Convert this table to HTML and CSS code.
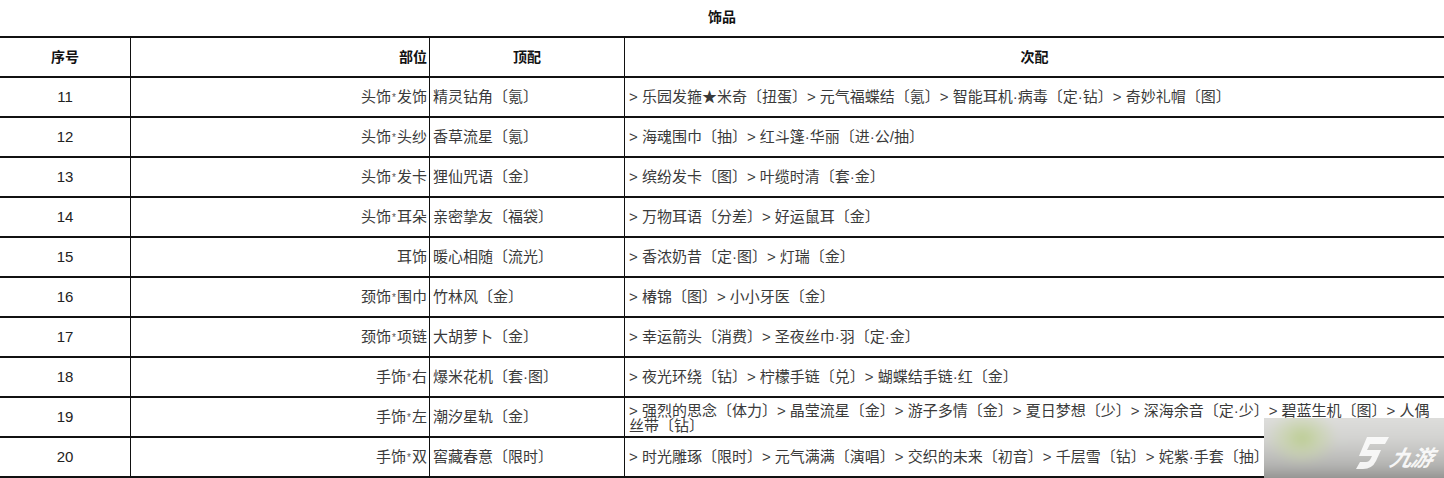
FILE: index.html
```html
<!DOCTYPE html>
<html lang="zh-CN">
<head>
<meta charset="utf-8">
<title>饰品</title>
<link rel="stylesheet" href="styles.css">
</head>
<body>
<div class="page">
  <div class="title">饰品</div>
  <table class="grid">
    <colgroup>
      <col class="c-no"><col class="c-part"><col class="c-top"><col class="c-sub">
    </colgroup>
    <thead>
      <tr><th>序号</th><th class="right">部位</th><th>顶配</th><th>次配</th></tr>
    </thead>
    <tbody>
      <tr><td class="num">11</td><td class="part">头饰<span class="sep">*</span>发饰</td><td class="top">精灵钻角〔氪〕</td><td class="sub">&gt; 乐园发箍★米奇〔扭蛋〕&gt; 元气福蝶结〔氪〕&gt; 智能耳机·病毒〔定·钻〕&gt; 奇妙礼帽〔图〕</td></tr>
      <tr><td class="num">12</td><td class="part">头饰<span class="sep">*</span>头纱</td><td class="top">香草流星〔氪〕</td><td class="sub">&gt; 海魂围巾〔抽〕&gt; 红斗篷·华丽〔进·公/抽〕</td></tr>
      <tr><td class="num">13</td><td class="part">头饰<span class="sep">*</span>发卡</td><td class="top">狸仙咒语〔金〕</td><td class="sub">&gt; 缤纷发卡〔图〕&gt; 叶缆时清〔套·金〕</td></tr>
      <tr><td class="num">14</td><td class="part">头饰<span class="sep">*</span>耳朵</td><td class="top">亲密挚友〔福袋〕</td><td class="sub">&gt; 万物耳语〔分差〕&gt; 好运鼠耳〔金〕</td></tr>
      <tr><td class="num">15</td><td class="part">耳饰</td><td class="top">暖心相随〔流光〕</td><td class="sub">&gt; 香浓奶昔〔定·图〕&gt; 灯瑞〔金〕</td></tr>
      <tr><td class="num">16</td><td class="part">颈饰<span class="sep">*</span>围巾</td><td class="top">竹林风〔金〕</td><td class="sub">&gt; 椿锦〔图〕&gt; 小小牙医〔金〕</td></tr>
      <tr><td class="num">17</td><td class="part">颈饰<span class="sep">*</span>项链</td><td class="top">大胡萝卜〔金〕</td><td class="sub">&gt; 幸运箭头〔消费〕&gt; 圣夜丝巾·羽〔定·金〕</td></tr>
      <tr><td class="num">18</td><td class="part">手饰<span class="sep">*</span>右</td><td class="top">爆米花机〔套·图〕</td><td class="sub">&gt; 夜光环绕〔钻〕&gt; 柠檬手链〔兑〕&gt; 蝴蝶结手链·红〔金〕</td></tr>
      <tr><td class="num">19</td><td class="part">手饰<span class="sep">*</span>左</td><td class="top">潮汐星轨〔金〕</td><td class="sub two">&gt; 强烈的思念〔体力〕&gt; 晶莹流星〔金〕&gt; 游子多情〔金〕&gt; 夏日梦想〔少〕&gt; 深海余音〔定·少〕&gt; 碧蓝生机〔图〕&gt; 人偶<br>丝带〔钻〕</td></tr>
      <tr><td class="num">20</td><td class="part">手饰<span class="sep">*</span>双</td><td class="top">窖藏春意〔限时〕</td><td class="sub">&gt; 时光雕琢〔限时〕&gt; 元气满满〔演唱〕&gt; 交织的未来〔初音〕&gt; 千层雪〔钻〕&gt; 姹紫·手套〔抽〕</td></tr>
    </tbody>
  </table>
  <div class="watermark">
    <div class="wm-bg"></div>
    <div class="wm-logo">
      <svg class="wm-mark" width="36" height="34" viewBox="0 0 36 34">
        <path d="M13 1 L35 1 L31 8 L16 8 L13 14 L27 14 L22 25 Q18 33 9 33 L2 33 L6 26 L12 26 Q15 26 16.5 23 L18 20 L5 20 Z" fill="#fff" fill-opacity="0.85"/>
      </svg>
      <span class="wm-text">九游</span>
    </div>
  </div>
</div>
</body>
</html>
```
FILE: styles.css
```css
html, body {
  margin: 0;
  padding: 0;
  background: #fff;
}
body {
  font-family: "Liberation Sans", "Noto Sans CJK SC", sans-serif;
  font-size: 15px;
  color: #3a3a3a;
}
.page {
  position: relative;
  width: 1444px;
  height: 478px;
  overflow: hidden;
}
.title {
  height: 36px;
  line-height: 34px;
  text-align: center;
  font-weight: bold;
  color: #111;
  font-size: 14px;
}
.grid {
  width: 1444px;
  border-collapse: separate;
  border-spacing: 0;
  table-layout: fixed;
  border-top: 2px solid #111;
}
.c-no { width: 130px; }
.c-part { width: 299px; }
.c-top { width: 195px; }
.c-sub { width: 820px; }
.grid th, .grid td {
  box-sizing: border-box;
  height: 40px;
  padding: 0 3px;
  border-bottom: 2px solid #111;
  line-height: 16px;
  vertical-align: middle;
  white-space: nowrap;
  overflow: hidden;
}
.grid th + th, .grid td + td {
  border-left: 1px solid #111;
}
.grid th {
  font-weight: bold;
  font-size: 14px;
  color: #111;
  text-align: center;
}
.grid th.right {
  text-align: right;
  padding-right: 2px;
}
.num {
  text-align: center;
  font-size: 15px;
  color: #222;
}
.part {
  text-align: right;
  padding-right: 2px !important;
}
.sep {
  font-size: 10px;
  vertical-align: 1px;
  color: #555;
  padding: 0 1px;
}
.top, .sub {
  text-align: left;
}
.sub {
  padding-left: 4px !important;
}
.sub.two {
  line-height: 15px;
  padding-top: 2px !important;
}
.watermark {
  position: absolute;
  left: 1264px;
  top: 418px;
  width: 180px;
  height: 60px;
  overflow: hidden;
}
.wm-bg {
  position: absolute;
  inset: -10px;
  background:
    radial-gradient(ellipse 36px 28px at 48px 30px, #bccd92 0%, rgba(200,212,170,0.7) 50%, rgba(210,210,205,0) 100%),
    linear-gradient(180deg, #e2e2e0 0%, #d2d2d0 40%, #b4b4b2 72%, #7e7e7c 100%);
  filter: blur(4px);
}
.wm-logo {
  position: absolute;
  left: 90px;
  top: 16px;
  display: flex;
  align-items: center;
  gap: 1px;
}
.wm-text {
  font-family: "Noto Sans CJK SC", sans-serif;
  color: rgba(255,255,255,0.9);
  font-size: 22px;
  font-weight: bold;
  font-style: italic;
  letter-spacing: -1px;
  transform: skewX(-14deg);
  margin-top: 6px;
}
```
